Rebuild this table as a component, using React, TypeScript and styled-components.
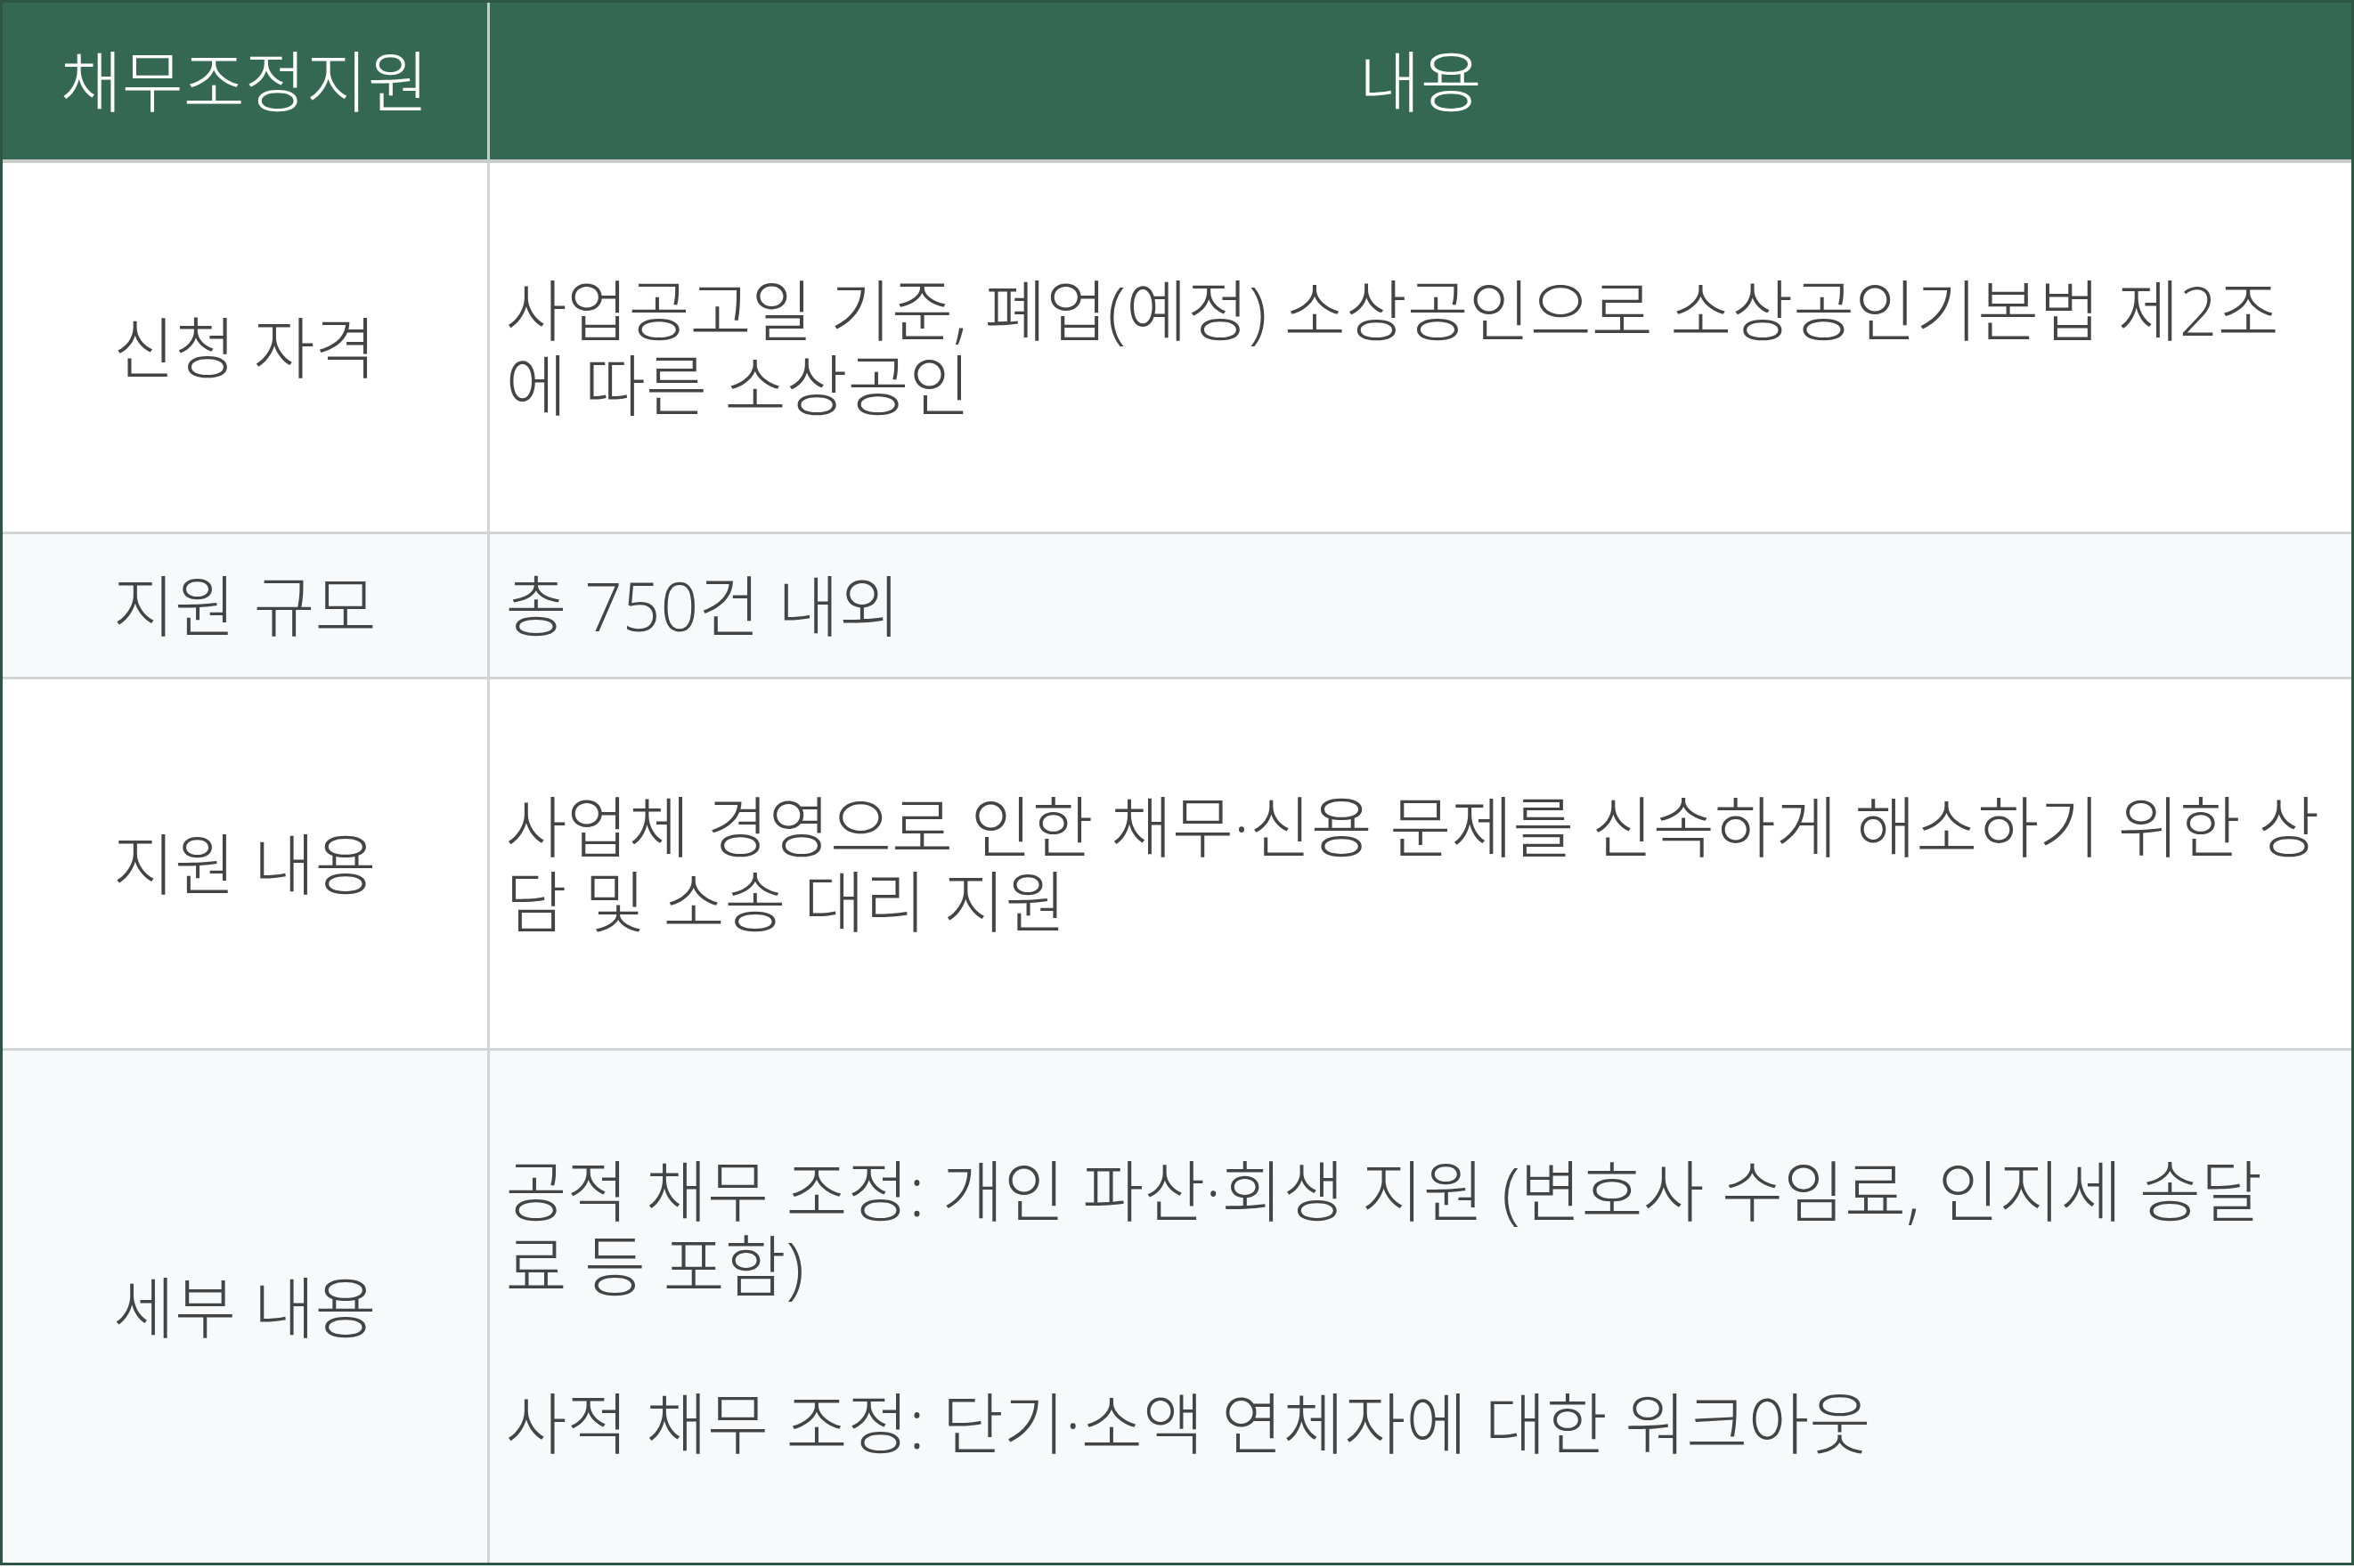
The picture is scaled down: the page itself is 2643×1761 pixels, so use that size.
import React from "react";
import styled, { createGlobalStyle } from "styled-components";

const GlobalStyle = createGlobalStyle`
  html, body {
    margin: 0;
    padding: 0;
    background: #ffffff;
  }
  body {
    font-family: 'Open Sans', 'Noto Sans CJK KR', sans-serif;
  }
`;

type Row = {
  label: string;
  paragraphs: string[];
  space: number;
  shaded?: boolean;
};

const rows: Row[] = [
  {
    label: "신청 자격",
    paragraphs: ["사업공고일 기준, 폐업(예정) 소상공인으로 소상공인기본법 제2조에 따른 소상공인"],
    space: 123,
  },
  {
    label: "지원 규모",
    paragraphs: ["총 750건 내외"],
    space: 38,
    shaded: true,
  },
  {
    label: "지원 내용",
    paragraphs: ["사업체 경영으로 인한 채무·신용 문제를 신속하게 해소하기 위한 상담 및 소송 대리 지원"],
    space: 123,
  },
  {
    label: "세부 내용",
    paragraphs: [
      "공적 채무 조정: 개인 파산·회생 지원 (변호사 수임료, 인지세 송달료 등 포함)",
      "사적 채무 조정: 단기·소액 연체자에 대한 워크아웃",
    ],
    space: 115,
    shaded: true,
  },
];

export default function App() {
  return (
    <>
      <GlobalStyle />
      <Frame>
        <Table>
          <colgroup>
            <col style={{ width: 545 }} />
            <col />
          </colgroup>
          <thead>
            <tr>
              <HeadCell>채무조정지원</HeadCell>
              <HeadCell>내용</HeadCell>
            </tr>
          </thead>
          <tbody>
            {rows.map((row) => (
              <BodyRow key={row.label} $shaded={row.shaded}>
                <LabelCell $space={row.space}>{row.label}</LabelCell>
                <ContentCell $space={row.space}>
                  {row.paragraphs.map((p) => (
                    <Paragraph key={p}>{p}</Paragraph>
                  ))}
                </ContentCell>
              </BodyRow>
            ))}
          </tbody>
        </Table>
      </Frame>
    </>
  );
}

const Frame = styled.div`
  width: 2643px;
  box-sizing: border-box;
  border: 3px solid #2f5545;
  background: #ffffff;
`;

const Table = styled.table`
  width: 100%;
  border-collapse: collapse;
  table-layout: fixed;
  font-size: 75px;
  font-weight: 300;
  line-height: 84px;
  color: #444444;
`;

const HeadCell = styled.th`
  background: #356852;
  color: #ffffff;
  font-weight: 300;
  text-align: center;
  padding: 46px 18px;
  border-left: 3px solid #c9cccb;
  border-bottom: 4px solid #c9cccb;

  &:first-child {
    border-left: none;
  }
`;

const BodyRow = styled.tr<{ $shaded?: boolean }>`
  background: ${(p) => (p.$shaded ? "#f8f9fa" : "#ffffff")};
  border-top: 3px solid #d2d5d7;

  &:first-child {
    border-top: none;
  }
`;

const LabelCell = styled.td<{ $space: number }>`
  padding: ${(p) => p.$space}px 18px;
  text-align: center;
  vertical-align: middle;
`;

const ContentCell = styled.td<{ $space: number }>`
  padding: ${(p) => p.$space}px 33px ${(p) => p.$space}px 18px;
  border-left: 3px solid #d2d5d7;
  vertical-align: middle;
  text-align: left;
`;

const Paragraph = styled.p`
  margin: 0;

  & + & {
    margin-top: 93px;
  }
`;
